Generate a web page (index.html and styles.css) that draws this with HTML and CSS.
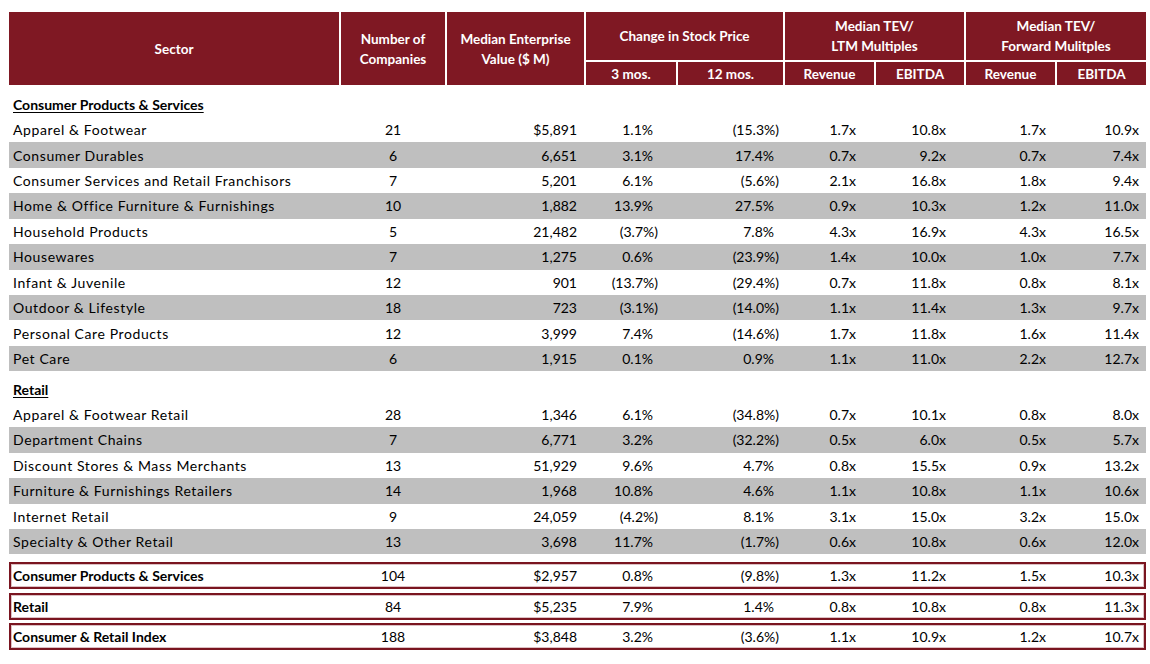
FILE: index.html
```html
<!DOCTYPE html>
<html>
<head>
<meta charset="utf-8">
<link rel="stylesheet" href="styles.css">
</head>
<body>
<div class="page">
  <div class="head">
    <div class="h sector">Sector</div>
    <div class="h num">Number of<br>Companies</div>
    <div class="h ev">Median Enterprise<br>Value ($ M)</div>
    <div class="h chg">Change in Stock Price</div>
    <div class="h ltm">Median TEV/<br>LTM Multiples</div>
    <div class="h fwd">Median TEV/<br>Forward Mulitples</div>
    <div class="h sub">3 mos.</div>
    <div class="h sub">12 mos.</div>
    <div class="h sub">Revenue</div>
    <div class="h sub">EBITDA</div>
    <div class="h sub">Revenue</div>
    <div class="h sub">EBITDA</div>
  </div>

  <div class="section first"><span class="sec-title">Consumer Products &amp; Services</span></div>
  <div class="row"><div class="name">Apparel &amp; Footwear</div><div>21</div><div>$5,891</div><div class="p">1.1%</div><div>(15.3%)</div><div>1.7x</div><div>10.8x</div><div>1.7x</div><div>10.9x</div></div>
  <div class="row gray"><div class="name">Consumer Durables</div><div>6</div><div>6,651</div><div class="p">3.1%</div><div class="p">17.4%</div><div>0.7x</div><div>9.2x</div><div>0.7x</div><div>7.4x</div></div>
  <div class="row"><div class="name">Consumer Services and Retail Franchisors</div><div>7</div><div>5,201</div><div class="p">6.1%</div><div>(5.6%)</div><div>2.1x</div><div>16.8x</div><div>1.8x</div><div>9.4x</div></div>
  <div class="row gray"><div class="name">Home &amp; Office Furniture &amp; Furnishings</div><div>10</div><div>1,882</div><div class="p">13.9%</div><div class="p">27.5%</div><div>0.9x</div><div>10.3x</div><div>1.2x</div><div>11.0x</div></div>
  <div class="row"><div class="name">Household Products</div><div>5</div><div>21,482</div><div>(3.7%)</div><div class="p">7.8%</div><div>4.3x</div><div>16.9x</div><div>4.3x</div><div>16.5x</div></div>
  <div class="row gray"><div class="name">Housewares</div><div>7</div><div>1,275</div><div class="p">0.6%</div><div>(23.9%)</div><div>1.4x</div><div>10.0x</div><div>1.0x</div><div>7.7x</div></div>
  <div class="row"><div class="name">Infant &amp; Juvenile</div><div>12</div><div>901</div><div>(13.7%)</div><div>(29.4%)</div><div>0.7x</div><div>11.8x</div><div>0.8x</div><div>8.1x</div></div>
  <div class="row gray"><div class="name">Outdoor &amp; Lifestyle</div><div>18</div><div>723</div><div>(3.1%)</div><div>(14.0%)</div><div>1.1x</div><div>11.4x</div><div>1.3x</div><div>9.7x</div></div>
  <div class="row"><div class="name">Personal Care Products</div><div>12</div><div>3,999</div><div class="p">7.4%</div><div>(14.6%)</div><div>1.7x</div><div>11.8x</div><div>1.6x</div><div>11.4x</div></div>
  <div class="row gray"><div class="name">Pet Care</div><div>6</div><div>1,915</div><div class="p">0.1%</div><div class="p">0.9%</div><div>1.1x</div><div>11.0x</div><div>2.2x</div><div>12.7x</div></div>

  <div class="section second"><span class="sec-title">Retail</span></div>
  <div class="row"><div class="name">Apparel &amp; Footwear Retail</div><div>28</div><div>1,346</div><div class="p">6.1%</div><div>(34.8%)</div><div>0.7x</div><div>10.1x</div><div>0.8x</div><div>8.0x</div></div>
  <div class="row gray"><div class="name">Department Chains</div><div>7</div><div>6,771</div><div class="p">3.2%</div><div>(32.2%)</div><div>0.5x</div><div>6.0x</div><div>0.5x</div><div>5.7x</div></div>
  <div class="row"><div class="name">Discount Stores &amp; Mass Merchants</div><div>13</div><div>51,929</div><div class="p">9.6%</div><div class="p">4.7%</div><div>0.8x</div><div>15.5x</div><div>0.9x</div><div>13.2x</div></div>
  <div class="row gray"><div class="name">Furniture &amp; Furnishings Retailers</div><div>14</div><div>1,968</div><div class="p">10.8%</div><div class="p">4.6%</div><div>1.1x</div><div>10.8x</div><div>1.1x</div><div>10.6x</div></div>
  <div class="row"><div class="name">Internet Retail</div><div>9</div><div>24,059</div><div>(4.2%)</div><div class="p">8.1%</div><div>3.1x</div><div>15.0x</div><div>3.2x</div><div>15.0x</div></div>
  <div class="row gray"><div class="name">Specialty &amp; Other Retail</div><div>13</div><div>3,698</div><div class="p">11.7%</div><div>(1.7%)</div><div>0.6x</div><div>10.8x</div><div>0.6x</div><div>12.0x</div></div>

  <div class="totals">
    <div class="row total"><div class="name">Consumer Products &amp; Services</div><div>104</div><div>$2,957</div><div class="p">0.8%</div><div>(9.8%)</div><div>1.3x</div><div>11.2x</div><div>1.5x</div><div>10.3x</div></div>
    <div class="row total"><div class="name">Retail</div><div>84</div><div>$5,235</div><div class="p">7.9%</div><div class="p">1.4%</div><div>0.8x</div><div>10.8x</div><div>0.8x</div><div>11.3x</div></div>
    <div class="row total"><div class="name">Consumer &amp; Retail Index</div><div>188</div><div>$3,848</div><div class="p">3.2%</div><div>(3.6%)</div><div>1.1x</div><div>10.9x</div><div>1.2x</div><div>10.7x</div></div>
  </div>
</div>
</body>
</html>
```

FILE: styles.css
```css
html, body {
  margin: 0;
  padding: 0;
  background: #ffffff;
}

.page {
  padding: 12px 0 0 9px;
  width: 1137px;
  font-family: Lato, "Open Sans", "Liberation Sans", sans-serif;
  color: #000;
}

.head,
.row {
  display: grid;
  grid-template-columns: 330px 104px 137px 90px 105px 89px 88px 89px 89px;
  column-gap: 2px;
}

.head {
  grid-template-rows: 48px 23px;
  row-gap: 2px;
  background: #ffffff;
}

.h {
  background: #7f1823;
  color: #ffffff;
  font-weight: 700;
  font-size: 13.5px;
  line-height: 20px;
  display: flex;
  align-items: center;
  justify-content: center;
  text-align: center;
}

.sector { grid-column: 1; grid-row: 1 / 3; }
.num { grid-column: 2; grid-row: 1 / 3; }
.ev { grid-column: 3; grid-row: 1 / 3; }
.chg { grid-column: 4 / 6; grid-row: 1; }
.ltm { grid-column: 6 / 8; grid-row: 1; }
.fwd { grid-column: 8 / 10; grid-row: 1; }
.sub { grid-row: 2; }

.section {
  height: 25.44px;
  display: flex;
  align-items: center;
  padding-left: 4px;
  font-size: 14px;
  font-weight: 700;
}
.section.first { margin-top: 6.5px; }
.section.second { margin-top: 5px; }

.sec-title {
  text-decoration: underline;
  text-underline-offset: 2px;
}

.row {
  height: 25.44px;
  align-items: center;
  font-size: 14px;
  white-space: nowrap;
}

.row.gray { background: #bfbfbf; }

.row > div { text-align: right; }

.row > .name {
  text-align: left;
  padding-left: 4px;
  letter-spacing: 0.6px;
}

.row > div:nth-child(2) { text-align: center; }
.row > div:nth-child(3) { padding-right: 7px; }
.row > div:nth-child(4) { padding-right: 18px; }
.row > div:nth-child(5) { padding-right: 4px; }
.row > div:nth-child(6) { padding-right: 18px; }
.row > div:nth-child(7) { padding-right: 18px; }
.row > div:nth-child(8) { padding-right: 9px; }
.row > div:nth-child(9) { padding-right: 7px; }

.row > div:nth-child(4).p { padding-right: 23px; }
.row > div:nth-child(5).p { padding-right: 9px; }

.totals {
  margin-top: 8px;
  display: flex;
  flex-direction: column;
  gap: 3.5px;
}

.row.total {
  height: 27px;
  box-shadow: inset 0 0 0 2px #7a1520, inset 0 0 0 3px #dcc0c3;
}

.row.total > .name {
  font-weight: 700;
  letter-spacing: 0;
}
```
